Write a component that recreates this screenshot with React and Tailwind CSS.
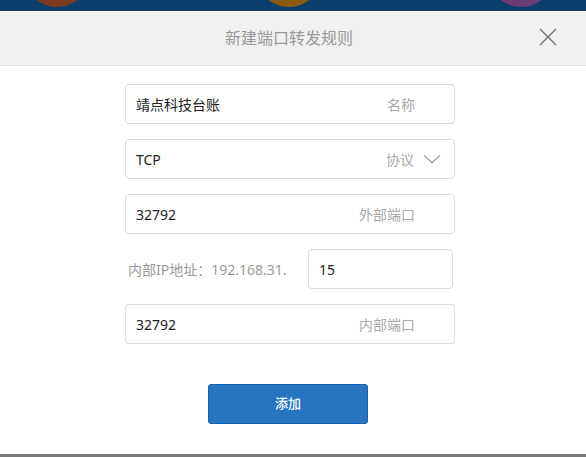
export default function App() {
  const font = { fontFamily: '"Noto Sans", "Noto Sans CJK SC", sans-serif' };
  return (
    <div className="w-[586px] h-[457px] bg-white flex flex-col overflow-hidden" style={font}>
      <div className="relative h-[11px] bg-[#0c3e6b] overflow-hidden shrink-0">
        <div className="absolute left-[24px] top-[-59px] w-[66px] h-[66px] rounded-full bg-[#7b3a1f]" />
        <div className="absolute left-[256px] top-[-59px] w-[66px] h-[66px] rounded-full bg-[#8d5a12]" />
        <div className="absolute left-[488px] top-[-59px] w-[66px] h-[66px] rounded-full bg-[#6b3b78]" />
      </div>
      <div className="relative h-[55px] shrink-0 bg-[#f1f1f1] border-b border-[#e3e3e3] flex items-center justify-center">
        <span className="text-[16px] text-[#999] ml-[-8px]">新建端口转发规则</span>
        <button className="absolute right-[29px] top-[17px] w-[18px] h-[18px]">
          <svg width="18" height="18" viewBox="0 0 18 18" fill="none" stroke="#777" strokeWidth="1.5">
            <path d="M1 1 L17 17 M17 1 L1 17" />
          </svg>
        </button>
      </div>
      <div className="flex-1 flex flex-col pt-[18px] pl-[125px]">
        <div className="w-[330px] flex flex-col gap-[15px]">
          <div className="h-10 border border-[#dcdcdc] rounded-[4px] flex items-center pl-[10px] pr-[39px] text-[14px]">
            <span className="flex-1 text-[#222]">靖点科技台账</span>
            <span className="text-[#a8a8a8]">名称</span>
          </div>
          <div className="h-10 border border-[#dcdcdc] rounded-[4px] flex items-center pl-[10px] pr-[13px] text-[14px]">
            <span className="flex-1 text-[#222]">TCP</span>
            <span className="text-[#a8a8a8]">协议</span>
            <svg className="ml-[9px]" width="18" height="10" viewBox="0 0 18 10" fill="none" stroke="#a8a8a8" strokeWidth="1.5">
              <path d="M1 1.5 L9 8.5 L17 1.5" />
            </svg>
          </div>
          <div className="h-10 border border-[#dcdcdc] rounded-[4px] flex items-center pl-[10px] pr-[39px] text-[14px]">
            <span className="flex-1 text-[#222]">32792</span>
            <span className="text-[#a8a8a8]">外部端口</span>
          </div>
          <div className="h-10 flex items-center">
            <span className="w-[183px] pl-[3px] text-[14px] text-[#9a9a9a]">内部IP地址：192.168.31.</span>
            <div className="w-[145px] h-10 border border-[#dcdcdc] rounded-[4px] flex items-center pl-[10px] text-[14px] text-[#222]">15</div>
          </div>
          <div className="h-10 border border-[#dcdcdc] rounded-[4px] flex items-center pl-[10px] pr-[39px] text-[14px]">
            <span className="flex-1 text-[#222]">32792</span>
            <span className="text-[#a8a8a8]">内部端口</span>
          </div>
        </div>
        <button className="mt-[40px] ml-[83px] w-[160px] h-[40px] rounded-[3px] bg-[#2775c1] border border-[#1b5fa6] text-white text-[13px] font-medium flex items-center justify-center">
          添加
        </button>
      </div>
      <div className="h-[3px] bg-[#7b7b7b] shrink-0" />
    </div>
  );
}
